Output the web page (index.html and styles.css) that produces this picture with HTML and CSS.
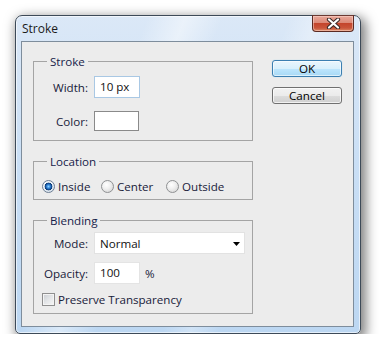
FILE: index.html
```html
<!DOCTYPE html>
<html>
<head>
<meta charset="utf-8">
<title>Stroke</title>
<link rel="stylesheet" href="styles.css">
</head>
<body>
<div class="window">
  <div class="titlebar">
    <span class="title">Stroke</span>
    <button class="close" aria-label="Close">
      <svg width="15" height="11" viewBox="0 0 15 11">
        <path d="M3 1.5 L12 9.5 M12 1.5 L3 9.5" stroke="#3a2a28" stroke-width="4.2" stroke-linecap="round" fill="none"/>
        <path d="M3 1.5 L12 9.5 M12 1.5 L3 9.5" stroke="#ffffff" stroke-width="2.2" stroke-linecap="round" fill="none"/>
      </svg>
    </button>
  </div>
  <div class="client">
    <div class="groups">
      <fieldset class="group g-stroke">
        <legend>Stroke</legend>
        <div class="row">
          <span class="lbl">Width:</span>
          <div class="field field-focus">10 px</div>
        </div>
        <div class="row row-color">
          <span class="lbl">Color:</span>
          <div class="swatch"></div>
        </div>
      </fieldset>
      <fieldset class="group g-location">
        <legend>Location</legend>
        <div class="radios">
          <div class="opt opt-1"><span class="radio checked"></span><span>Inside</span></div>
          <div class="opt opt-2"><span class="radio"></span><span>Center</span></div>
          <div class="opt opt-3"><span class="radio"></span><span>Outside</span></div>
        </div>
      </fieldset>
      <fieldset class="group g-blending">
        <legend>Blending</legend>
        <div class="row">
          <span class="lbl">Mode:</span>
          <div class="select">
            <span>Normal</span>
            <svg class="arrow" width="7" height="4" viewBox="0 0 7 4"><path d="M0 0 H7 L3.5 4 Z" fill="#000"/></svg>
          </div>
        </div>
        <div class="row row-opacity">
          <span class="lbl">Opacity:</span>
          <div class="field field-plain">100</div>
          <span class="unit">%</span>
        </div>
        <div class="check-row">
          <span class="checkbox"></span>
          <span>Preserve Transparency</span>
        </div>
      </fieldset>
    </div>
    <div class="buttons">
      <button class="btn btn-default">OK</button>
      <button class="btn">Cancel</button>
    </div>
  </div>
</div>
</body>
</html>
```

FILE: styles.css
```css
html, body {
  margin: 0;
  background: #ffffff;
}

body {
  padding: 15px 0 0 15px;
  font-family: "Segoe UI", "Open Sans", "DejaVu Sans", sans-serif;
  font-size: 11.6px;
  color: #18213a;
}

.window {
  width: 346px;
  height: 319px;
  box-sizing: border-box;
  border: 1px solid #3d4a58;
  border-radius: 7px 7px 5px 5px;
  padding: 0 6px 6px 5px;
  display: flex;
  flex-direction: column;
  background:
    linear-gradient(112deg,
      rgba(255,255,255,0) 28%,
      rgba(255,255,255,0.45) 36%,
      rgba(255,255,255,0) 44%,
      rgba(255,255,255,0) 58%,
      rgba(255,255,255,0.3) 64%,
      rgba(255,255,255,0) 70%),
    linear-gradient(180deg, #dbe8f7 0%, #cadff5 45%, #bcd7f2 100%);
  box-shadow:
    inset 0 0 0 1px rgba(255,255,255,0.6),
    3px 4px 12px 2px rgba(0,0,0,0.5);
}

.titlebar {
  height: 25px;
  display: flex;
  align-items: flex-start;
}

.title {
  margin-left: 1px;
  line-height: 26px;
  font-size: 12px;
  color: #1a1a1a;
}

.close {
  margin-left: auto;
  margin-top: -1px;
  width: 42px;
  height: 17px;
  padding: 0;
  border: 1px solid #5b2a22;
  border-top-color: #6a3a33;
  border-radius: 0 0 4px 4px;
  background:
    linear-gradient(180deg, #e9a89a 0%, #dc8a78 45%, #c4452c 50%, #c9553a 80%, #dd8a66 100%);
  box-shadow: inset 0 0 0 1px rgba(255,220,210,0.5);
  display: flex;
  align-items: center;
  justify-content: center;
}

.close svg {
  display: block;
}

.client {
  flex: 1;
  box-sizing: border-box;
  border: 1px solid #7e8d9c;
  background: #ececec;
  padding: 11px;
  display: flex;
  gap: 19px;
}

.groups {
  width: 220px;
  display: flex;
  flex-direction: column;
  gap: 12px;
}

.group {
  margin: 0;
  min-width: 0;
  border: 1px solid #a4a4a4;
  padding: 0;
}

.group legend {
  margin-left: 13px;
  padding: 0 3px;
  line-height: 17px;
  color: #17224a;
}

.g-stroke {
  padding: 6px 0 9px 0;
}

.g-location {
  padding: 8px 0 5px 0;
}

.g-blending {
  padding: 3px 0 6px 0;
}

.row {
  display: flex;
  align-items: center;
  gap: 6px;
  height: 22px;
}

.row-color {
  margin-top: 13px;
  height: 20px;
}

.row-opacity {
  margin-top: 8px;
}

.lbl {
  width: 54px;
  text-align: right;
  white-space: nowrap;
}

.field {
  width: 46px;
  height: 22px;
  box-sizing: border-box;
  background: #ffffff;
  padding-left: 5px;
  line-height: 20px;
  color: #111;
}

.field-focus {
  border: 1px solid #a9c8e4;
}

.field-plain {
  border: 1px solid #e4e4e4;
}

.swatch {
  width: 45px;
  height: 20px;
  box-sizing: border-box;
  border: 1px solid #8a8a8a;
  background: #ffffff;
}

.unit {
  margin-left: -1px;
}

.select {
  width: 151px;
  height: 22px;
  box-sizing: border-box;
  border: 1px solid #e2e2e2;
  background: #ffffff;
  display: flex;
  align-items: center;
  justify-content: space-between;
  padding: 0 4px 0 5px;
  color: #111;
}

.select .arrow {
  display: block;
  margin-top: 1px;
}

.radios {
  display: flex;
  align-items: center;
  height: 16px;
  padding-left: 8px;
}

.opt {
  display: flex;
  align-items: center;
  gap: 3px;
}

.opt-1 { width: 59px; }
.opt-2 { width: 65px; }
.opt-3 { width: auto; }

.radio {
  width: 13px;
  height: 13px;
  box-sizing: border-box;
  border-radius: 50%;
  border: 1px solid #8f9193;
  background: radial-gradient(circle at 40% 35%, #ffffff 0%, #f0f0f0 40%, #cfcfcf 100%);
  flex: none;
}

.radio.checked {
  border-color: #6e7f94;
  background:
    radial-gradient(circle at 50% 50%, #8fd2ff 0px, #3a8ee0 1.6px, #144f97 3px, #0c3a72 3.6px, rgba(0,0,0,0) 4.2px),
    radial-gradient(circle at 40% 35%, #ffffff 0%, #eef3f8 45%, #c5d3e2 100%);
}

.check-row {
  margin-top: 7px;
  height: 16px;
  display: flex;
  align-items: center;
  gap: 3px;
  padding-left: 8px;
}

.checkbox {
  width: 13px;
  height: 13px;
  box-sizing: border-box;
  border: 1px solid #8f8f8f;
  background: linear-gradient(135deg, #c9ccd1 0%, #e4e6e8 50%, #f7f7f7 100%);
  box-shadow: inset 0 0 0 1px #f4f4f4;
  flex: none;
}

.buttons {
  width: 70px;
  padding-top: 7px;
  display: flex;
  flex-direction: column;
  gap: 10px;
}

.btn {
  width: 70px;
  height: 17px;
  padding: 0;
  border: 1px solid #707070;
  border-radius: 3px;
  font-family: inherit;
  font-size: 11.6px;
  line-height: 15px;
  color: #000;
  background: linear-gradient(180deg, #f2f2f2 0%, #ebebeb 50%, #dddddd 51%, #cfcfcf 100%);
  box-shadow: inset 0 0 0 1px rgba(255,255,255,0.7);
}

.btn-default {
  border-color: #3c7fb1;
  background: linear-gradient(180deg, #eaf6fd 0%, #d9f0fc 50%, #bee6fd 51%, #a7d9f5 100%);
  box-shadow: inset 0 0 0 1px rgba(255,255,255,0.6), 0 0 1px #8ad0f5;
}
```
